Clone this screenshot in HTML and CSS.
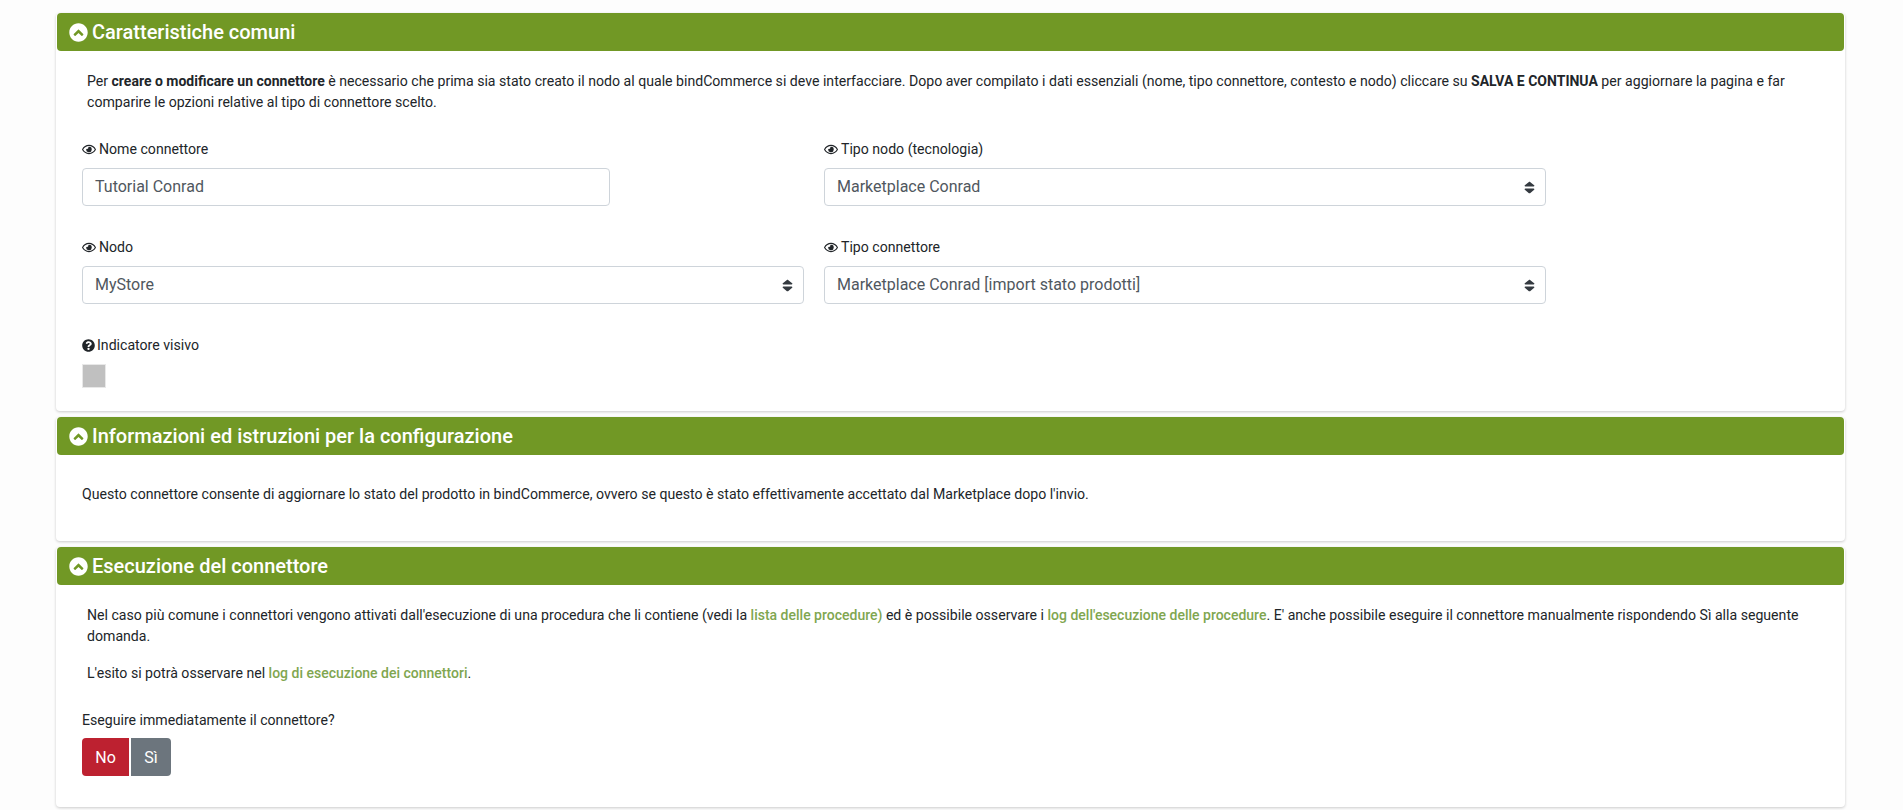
FILE: index.html
```html
<!DOCTYPE html>
<html lang="it">
<head>
  <meta charset="UTF-8">
  <title>Connettore</title>
  <link rel="stylesheet" href="styles.css">
</head>
<body>
  <svg class="defs" width="0" height="0">
    <symbol id="i-up" viewBox="0 0 512 512"><path d="M256 8C119 8 8 119 8 256s111 248 248 248 248-111 248-248S393 8 256 8zm127 314-24 24c-7 7-17 7-24 0l-79-79-79 79c-7 7-17 7-24 0l-24-24c-7-7-7-17 0-24l115-115c7-7 17-7 24 0l115 115c7 7 7 17 0 24z"/></symbol>
    <symbol id="i-eye" viewBox="0 0 576 512"><path d="M288 144a110.94 110.94 0 0 0-31.24 5 55.4 55.4 0 0 1 7.24 27 56 56 0 0 1-56 56 55.4 55.4 0 0 1-27-7.24A111.71 111.71 0 1 0 288 144zm284.52 97.4C518.29 135.59 410.93 64 288 64S57.68 135.64 3.48 241.41a32.35 32.35 0 0 0 0 29.19C57.71 376.41 165.07 448 288 448s230.32-71.64 284.52-177.41a32.35 32.35 0 0 0 0-29.19zM288 400c-98.65 0-189.09-55-237.93-144C98.91 167 189.34 112 288 112s189.09 55 237.93 144C477.1 345 386.66 400 288 400z"/></symbol>
    <symbol id="i-help" viewBox="0 0 512 512"><path d="M504 256c0 137-111 248-248 248S8 393 8 256 119 8 256 8s248 111 248 248zM263 90c-55 0-89 23-116 63-4 5-3 12 3 16l35 26c5 4 13 3 17-2 18-23 30-36 58-36 21 0 46 13 46 33 0 15-12 23-33 34-23 13-54 30-54 71v4c0 7 5 12 12 12h56c7 0 12-5 12-12v-1c0-29 84-30 84-108 0-58-61-100-120-100zm-7 250a46 46 0 1 0 0 92 46 46 0 0 0 0-92z"/></symbol>
    <symbol id="i-sort" viewBox="0 0 320 512" preserveAspectRatio="none"><path d="M41 288h238c21 0 32 26 17 41L177 448c-9 9-25 9-34 0L24 329c-15-15-4-41 17-41zm255-105L177 64c-9-9-25-9-34 0L24 183c-15 15-4 41 17 41h238c21 0 32-26 17-41z"/></symbol>
  </svg>

  <div class="page">
    <section class="card">
      <h2 class="card-head"><svg class="head-icon"><use href="#i-up"/></svg>Caratteristiche comuni</h2>
      <div class="card-body body-common">
        <p class="intro">Per <b>creare o modificare un connettore</b> è necessario che prima sia stato creato il nodo al quale bindCommerce si deve interfacciare. Dopo aver compilato i dati essenziali (nome, tipo connettore, contesto e nodo) cliccare su <b>SALVA E CONTINUA</b> per aggiornare la pagina e far comparire le opzioni relative al tipo di connettore scelto.</p>
        <div class="form-grid">
          <div class="field">
            <label><svg class="eye"><use href="#i-eye"/></svg>Nome connettore</label>
            <div class="control control-short">Tutorial Conrad</div>
          </div>
          <div class="field">
            <label><svg class="eye"><use href="#i-eye"/></svg>Tipo nodo (tecnologia)</label>
            <div class="control">Marketplace Conrad<svg class="sort"><use href="#i-sort"/></svg></div>
          </div>
          <div class="field">
            <label><svg class="eye"><use href="#i-eye"/></svg>Nodo</label>
            <div class="control">MyStore<svg class="sort"><use href="#i-sort"/></svg></div>
          </div>
          <div class="field">
            <label><svg class="eye"><use href="#i-eye"/></svg>Tipo connettore</label>
            <div class="control">Marketplace Conrad [import stato prodotti]<svg class="sort"><use href="#i-sort"/></svg></div>
          </div>
          <div class="field">
            <label><svg class="help"><use href="#i-help"/></svg>Indicatore visivo</label>
            <div class="swatch"></div>
          </div>
        </div>
      </div>
    </section>

    <section class="card">
      <h2 class="card-head"><svg class="head-icon"><use href="#i-up"/></svg>Informazioni ed istruzioni per la configurazione</h2>
      <div class="card-body body-info">
        <p class="info">Questo connettore consente di aggiornare lo stato del prodotto in bindCommerce, ovvero se questo è stato effettivamente accettato dal Marketplace dopo l'invio.</p>
      </div>
    </section>

    <section class="card">
      <h2 class="card-head"><svg class="head-icon"><use href="#i-up"/></svg>Esecuzione del connettore</h2>
      <div class="card-body body-run">
        <p class="intro">Nel caso più comune i connettori vengono attivati dall'esecuzione di una procedura che li contiene (vedi la <a href="#">lista delle procedure)</a> ed è possibile osservare i <a href="#">log dell'esecuzione delle procedure</a>. E' anche possibile eseguire il connettore manualmente rispondendo Sì alla seguente domanda.</p>
        <p class="intro">L'esito si potrà osservare nel <a href="#">log di esecuzione dei connettori</a>.</p>
        <p class="question">Eseguire immediatamente il connettore?</p>
        <div class="btn-group">
          <button class="btn btn-no">No</button>
          <button class="btn btn-si">Sì</button>
        </div>
      </div>
    </section>
  </div>
</body>
</html>
```

FILE: styles.css
```css
* {
  box-sizing: border-box;
}
html, body {
  height: 100%;
}
body {
  margin: 0;
  background: #fdfdfd;
  font-family: Roboto, "Liberation Sans", sans-serif;
  font-size: 14.12px;
  line-height: 21px;
  color: #212529;
  overflow: hidden;
}
.defs {
  display: block;
  height: 0;
}
.page {
  padding: 13px 59px 0 57px;
}
.card {
  margin-bottom: 6px;
  margin-left: -1px;
  margin-right: -1px;
  background: #fff;
  border-radius: 4px;
  box-shadow: 0 1px 3px rgba(0, 0, 0, 0.2);
}
.card-head {
  display: flex;
  align-items: center;
  height: 38px;
  margin: 0 1px;
  padding-left: 12px;
  background: #719825;
  border-radius: 4px;
  color: #fff;
  font-size: 20px;
  font-weight: 500;
  line-height: 24px;
}
.head-icon {
  width: 19px;
  height: 19px;
  margin-right: 4px;
  fill: #fff;
}
.card-body {
  padding: 20px 26px 0 26px;
}
.body-common {
  height: 360px;
}
.body-info {
  height: 86px;
}
.body-run {
  height: 222px;
}
p {
  margin: 0;
}
.intro {
  margin-bottom: 16px;
  padding-left: 5px;
}
b {
  font-size: 14px;
  font-weight: 700;
}
a {
  color: #7fa650;
  font-size: 14px;
  font-weight: 500;
  text-decoration: none;
}
.form-grid {
  display: grid;
  grid-template-columns: 722px 722px;
  column-gap: 20px;
  row-gap: 31px;
  margin-top: 26px;
}
.field label {
  display: flex;
  align-items: center;
  height: 21px;
  margin-bottom: 8px;
}
.eye {
  width: 14px;
  height: 13px;
  margin-right: 3px;
  fill: #212529;
}
.help {
  width: 13px;
  height: 13px;
  margin-right: 2px;
  fill: #212529;
}
.control {
  display: flex;
  align-items: center;
  justify-content: space-between;
  height: 38px;
  padding: 0 12px 2px;
  background: #fff;
  border: 1px solid #ced4da;
  border-radius: 4px;
  color: #50575e;
  font-size: 16px;
}
.control-short {
  width: 528px;
}
.sort {
  width: 11px;
  height: 15px;
  margin-right: -2px;
  margin-top: 2px;
  fill: #343a40;
}
.swatch {
  width: 24px;
  height: 24px;
  background: #c0c0c0;
  border: 1px solid #e8e8e8;
}
.info {
  margin-top: 9px;
}
.question {
  margin-top: 26px;
  margin-bottom: 7px;
}
.btn-group {
  display: flex;
  gap: 2px;
}
.btn {
  height: 38px;
  padding: 0;
  border: 0;
  color: #fff;
  font-family: inherit;
  font-size: 16px;
}
.btn-no {
  width: 47px;
  background: #bd2130;
  border-radius: 4px 0 0 4px;
}
.btn-si {
  width: 40px;
  background: #6c757d;
  border-radius: 0 4px 4px 0;
}
```
